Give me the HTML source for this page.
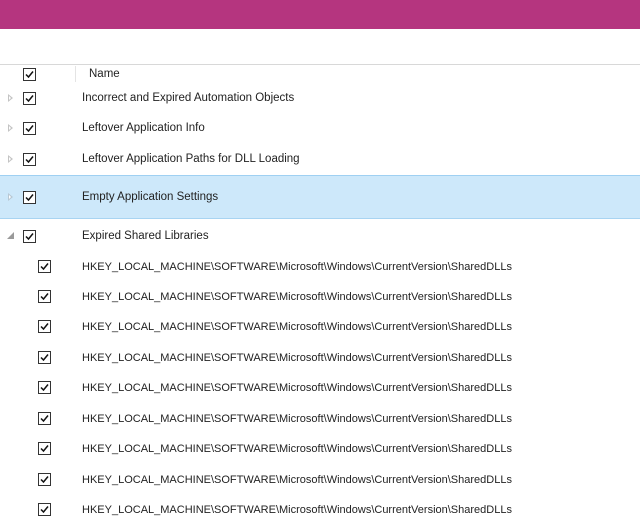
<!DOCTYPE html><html><head><style>
body{margin:0;width:640px;height:523px;overflow:hidden;background:#fff;font-family:"Liberation Sans",sans-serif;font-size:11.5px;color:#222;position:relative}
.top{position:absolute;left:0;top:0;width:640px;height:29px;background:#b5357f}
.line{position:absolute;left:0;top:64px;width:640px;height:1px;background:#d8d8d8}
.sep{position:absolute;left:75px;top:66px;width:1px;height:16px;background:#e4e4e4}
.sel{position:absolute;left:0;top:175px;width:640px;height:44px;background:#cde8fa;border-top:1px solid #9fd0f2;border-bottom:1px solid #a8d4f2;box-sizing:border-box}
.cb{position:absolute;width:11px;height:11px;border:1px solid #333;background:#fff}
.cb svg{position:absolute;left:1px;top:1px}
.t{position:absolute;left:82px;white-space:nowrap}
.h{font-size:11px}
.ex{position:absolute;left:8px;width:0;height:0;border-top:4px solid transparent;border-bottom:4px solid transparent;border-left:5px solid #c4c4c4}
.ex:after{content:"";position:absolute;left:-4px;top:-2px;border-top:2px solid transparent;border-bottom:2px solid transparent;border-left:2.5px solid #fff}
.open{position:absolute;left:7px;width:0;height:0;border-left:7px solid transparent;border-bottom:7px solid #9a9a9a}
</style></head><body>
<div class="top"></div>
<div class="line"></div>
<div class="sep"></div>
<div class="sel"></div>
<div class="t" style="left:89px;top:68px">Name</div>
<div class="t" style="top:92px">Incorrect and Expired Automation Objects</div>
<div class="t" style="top:122px">Leftover Application Info</div>
<div class="t" style="top:153px">Leftover Application Paths for DLL Loading</div>
<div class="t" style="top:191px">Empty Application Settings</div>
<div class="t" style="top:230px">Expired Shared Libraries</div>
<div class="ex" style="top:94px"></div>
<div class="ex" style="top:124px"></div>
<div class="ex" style="top:155px"></div>
<div class="ex" style="top:193px;border-left-color:#b8c8d4"></div>
<div class="open" style="top:232px"></div>
<script>
var ys=[[23,68],[23,92],[23,122],[23,153],[23,191],[23,230]];
var hy=[260,290,320,351,381,412,442,473,503];
hy.forEach(function(y){ys.push([38,y]);var d=document.createElement('div');d.className='t h';d.style.top=(y+1)+'px';d.textContent='HKEY_LOCAL_MACHINE\\SOFTWARE\\Microsoft\\Windows\\CurrentVersion\\SharedDLLs';document.body.appendChild(d);});
ys.forEach(function(p){var d=document.createElement('div');d.className='cb';d.style.left=p[0]+'px';d.style.top=p[1]+'px';d.innerHTML='<svg width="9" height="9" viewBox="0 0 9 9"><path d="M1 4.5 L3.5 7 L8 1.5" fill="none" stroke="#111" stroke-width="1.5"/></svg>';document.body.appendChild(d);});
</script>
</body></html>
